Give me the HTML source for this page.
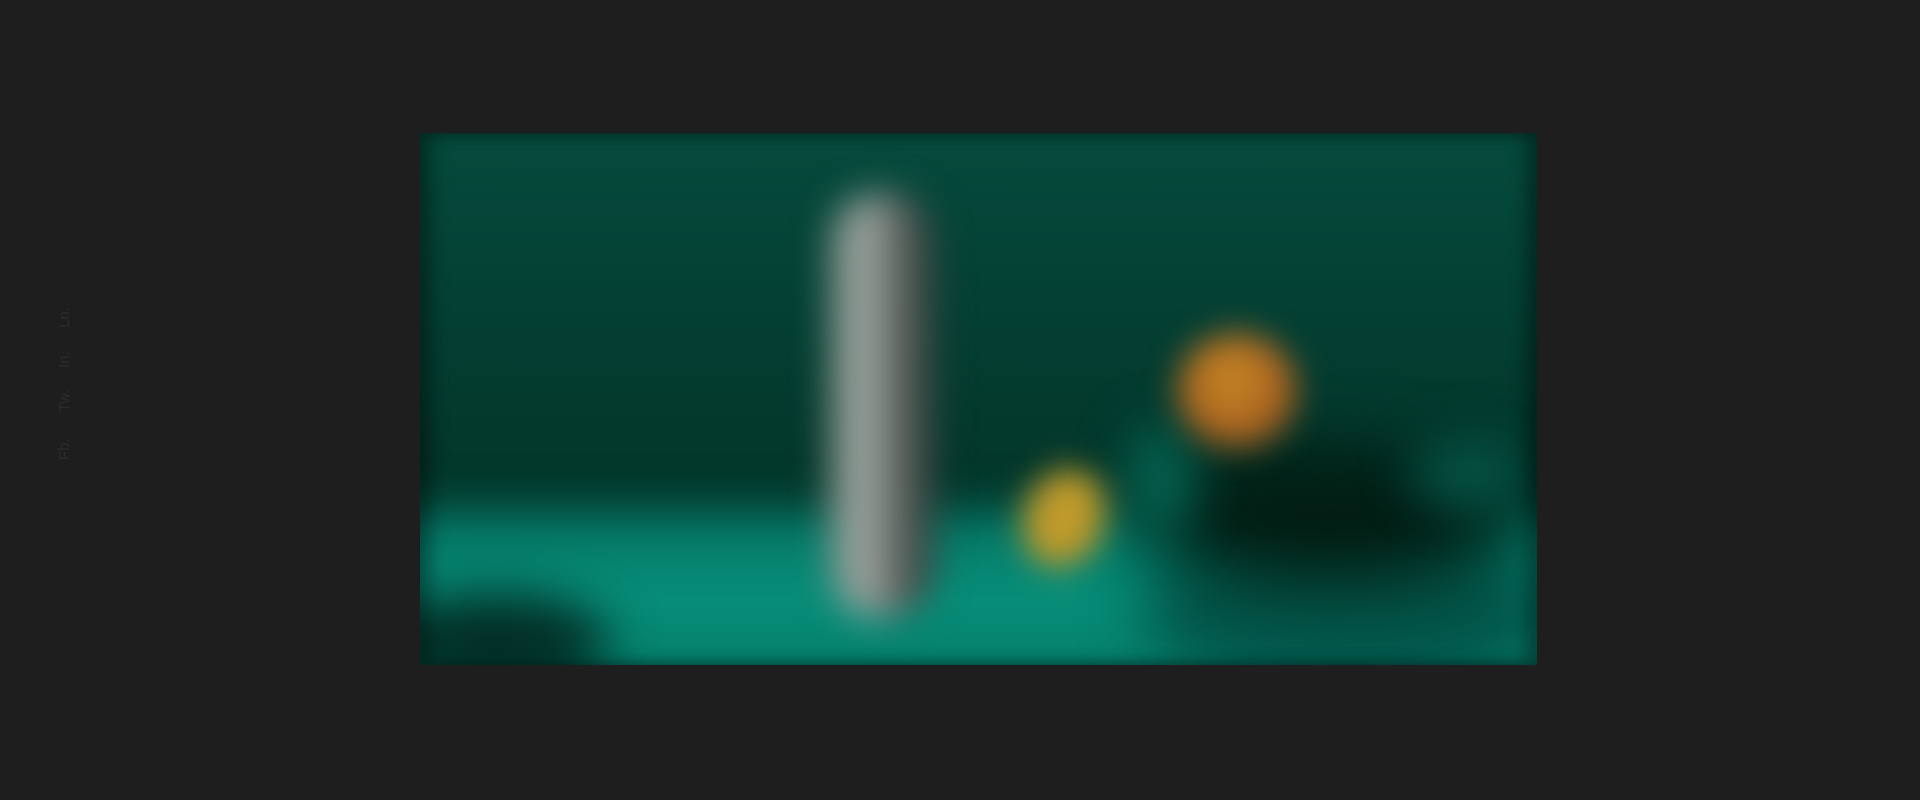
<!DOCTYPE html>
<html><head><style>
html,body{margin:0;padding:0;background:#1e1e1e;width:1920px;height:800px;overflow:hidden}
.side{position:absolute;left:56px;top:300px;width:16px;height:165px}
.side span{position:absolute;left:0;transform:rotate(-90deg);transform-origin:left top;font:15px "Liberation Sans",sans-serif;color:#2c2c2c;white-space:nowrap}
.img{position:absolute;left:420px;top:133px;width:1117px;height:532px;overflow:hidden;background:linear-gradient(180deg,#054b3d 0%,#043f33 35%,#03362a 65%,#033026 72%)}
.b{position:absolute;border-radius:50%;filter:blur(18px)}
</style></head><body>
<div class="side">
<span style="top:28px">Ln.</span>
<span style="top:68px">In.</span>
<span style="top:112px">Tw.</span>
<span style="top:160px">Fb.</span>
</div>
<div class="img">
<div class="b" style="left:-60px;top:375px;width:1240px;height:220px;border-radius:0;background:linear-gradient(180deg,#05705f,#07917c 40%,#06806c 70%,#05705f);filter:blur(22px)"></div>
<div class="b" style="left:720px;top:400px;width:420px;height:160px;background:#03564a;filter:blur(30px)"></div>
<div class="b" style="left:-40px;top:460px;width:230px;height:100px;background:#032e26;filter:blur(25px)"></div>
<div class="b" style="left:720px;top:320px;width:380px;height:130px;background:#021b12;filter:blur(34px)"></div>
<div class="b" style="left:990px;top:305px;width:120px;height:70px;background:#055245;filter:blur(24px)"></div>
<div class="b" style="left:705px;top:290px;width:70px;height:110px;background:#056150;filter:blur(24px)"></div>
<div class="b" style="left:410px;top:60px;width:105px;height:425px;border-radius:50px;background:linear-gradient(90deg,#7a8a82 0%,#a2aaa6 35%,#5e625e 65%,#2e3a36 100%);filter:blur(18px)"></div>
<div class="b" style="left:757px;top:200px;width:120px;height:115px;background:radial-gradient(circle at 45% 40%,#c88a25,#a86020 60%,#5a3a10);filter:blur(16px)"></div>
<div class="b" style="left:604px;top:335px;width:80px;height:100px;transform:rotate(20deg);background:#c09a2a;filter:blur(16px)"></div>
<div style="position:absolute;inset:0;box-shadow:inset 12px 0 16px rgba(0,0,0,.35),inset -12px 0 16px rgba(0,0,0,.35)"></div>
</div>
</body></html>
